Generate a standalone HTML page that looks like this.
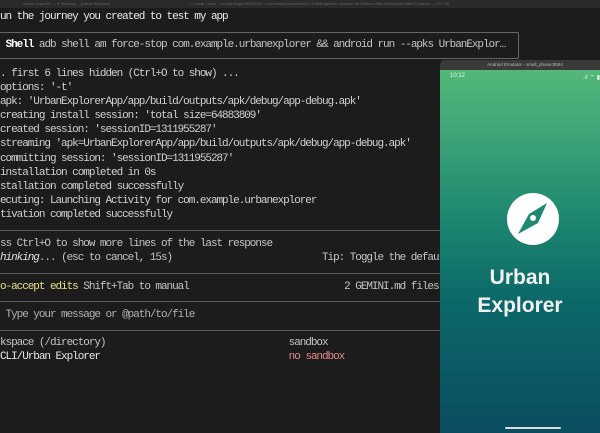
<!DOCTYPE html>
<html><head><meta charset="utf-8"><style>
body{margin:0;width:600px;height:433px;overflow:hidden;background:#1c1c1c;position:relative;font-family:"Liberation Mono",monospace;}
.t{position:absolute;left:0;font-size:11px;letter-spacing:-1.05px;color:#dcdcdc;white-space:pre;line-height:14.1px;}
.sep{position:absolute;left:0;width:600px;height:1px;background:#5a5a5a;}
</style></head><body>
<div style="position:absolute;left:0;top:0;width:600px;height:8px;background:#2a2a2a;color:#666;font-family:'Liberation Sans',sans-serif;font-size:4px;line-height:8px;">&nbsp;&nbsp;&nbsp;&nbsp;&nbsp;&nbsp;&nbsp;&nbsp;&nbsp;&nbsp;&nbsp;&nbsp;&nbsp;&nbsp;&nbsp;&nbsp;&nbsp;&nbsp;&nbsp;&nbsp;&nbsp;Urban Explorer — ✦ Working… (Urban Explorer)<span style="position:absolute;left:190px">— node › node --no-warnings=DEP0040 ~/.nvm/versions/node/v24.14.0/bin/gemini --resume 5a7056ee-c058-4b6d-a480-fa6a772cdcc4 — 101×30</span></div>
<div class="t" style="top:10px;color:#ececec">un the journey you created to test my app</div>
<div style="position:absolute;left:-2px;top:32px;width:519px;height:25px;border:1px solid #666;border-radius:2px;"></div>
<div class="t" style="top:38px;"> <b style="color:#fff">Shell</b> <span style="color:#c4c4c4">adb shell am force-stop com.example.urbanexplorer &amp;&amp; android run --apks UrbanExplor…</span></div>
<div class="t" style="top:67px;color:#d0d0d0">. first 6 lines hidden (Ctrl+O to show) ...
options: '-t'
apk: 'UrbanExplorerApp/app/build/outputs/apk/debug/app-debug.apk'
creating install session: 'total size=64883809'
created session: 'sessionID=1311955287'
streaming 'apk=UrbanExplorerApp/app/build/outputs/apk/debug/app-debug.apk'
committing session: 'sessionID=1311955287'
installation completed in 0s
stallation completed successfully
ecuting: Launching Activity for com.example.urbanexplorer
tivation completed successfully</div>
<div class="sep" style="top:230px"></div>
<div class="t" style="top:237px;color:#c4c4c4">ss Ctrl+O to show more lines of the last response
<i style="color:#e0e0e0">hinking</i>... (esc to cancel, 15s)                           Tip: Toggle the default</div>
<div class="sep" style="top:273px"></div>
<div class="t" style="top:280px;color:#c4c4c4"><span style="color:#e6e08a">o-accept edits</span> Shift+Tab to manual                            2 GEMINI.md files</div>
<div class="sep" style="top:301px"></div>
<div class="t" style="top:308px;color:#b0b0b0"> Type your message or @path/to/file</div>
<div class="sep" style="top:330px"></div>
<div class="t" style="top:336px;color:#c4c4c4">kspace (/directory)                                 sandbox
<span style="color:#e6e6e6">CLI/Urban Explorer</span>                                  <span style="color:#e08a8a">no sandbox</span></div>
<div style="position:absolute;left:440px;top:60px;width:160px;height:373px;border-radius:5px 0 0 0;overflow:hidden;background:#2c2c2c;">
<div style="height:10px;background:#3a3a3a;color:#bbb;font-family:'Liberation Sans',sans-serif;font-size:4.5px;line-height:10px;text-align:center;padding-left:10px">Android Emulator - small_phone:5554</div>
<div style="position:absolute;top:10px;left:0;right:0;bottom:0;background:linear-gradient(#53b879 0%,#3ea377 18%,#1f8870 40%,#0c6a68 62%,#0b5a66 82%,#0a4d60 100%);">
<div style="position:absolute;left:10px;top:3px;color:#e8f5ea;font-family:'Liberation Sans',sans-serif;font-size:6px;">10:12</div>
<div style="position:absolute;right:0;top:3px;color:#e8f5ea;font-family:'Liberation Sans',sans-serif;font-size:6px;">.ıl ⌔ ▮</div>
<svg style="position:absolute;left:67px;top:123px" width="52" height="52" viewBox="-26 -26 52 52"><circle r="26" fill="#fff"/><polygon points="14,-16 5,4 -15,15 -4,-5" fill="#1f8870"/><circle cx="0" cy="-1" r="3" fill="#fff"/></svg>
<div style="position:absolute;left:0;right:0;top:194px;text-align:center;color:#f2f2f2;font-family:'Liberation Sans',sans-serif;font-weight:bold;font-size:21px;line-height:28px;">Urban<br>Explorer</div>
<div style="position:absolute;left:65px;top:357px;width:56px;height:2px;background:#ddd;border-radius:1px;"></div>
</div></div>
</body></html>
